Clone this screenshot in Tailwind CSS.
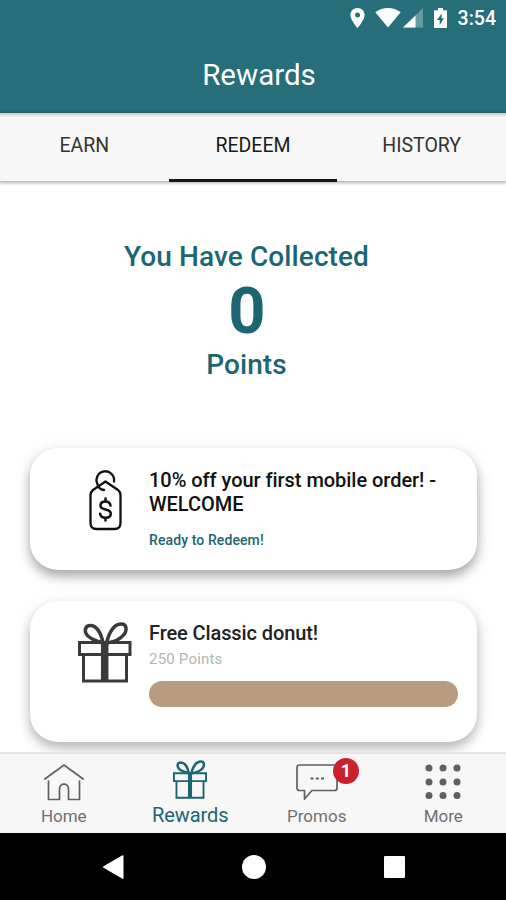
<!DOCTYPE html>
<html lang="en">
<head>
    <meta charset="UTF-8">
    <meta name="viewport" content="width=device-width, initial-scale=1.0">
    <title>Rewards</title>
    <script src="https://cdn.jsdelivr.net/npm/@tailwindcss/browser@4"></script>
</head>
<body class="bg-white font-[Roboto,sans-serif]">
<div class="w-[506px] h-[900px] flex flex-col overflow-hidden">

    <!-- Status bar + title -->
    <header class="h-[113px] shrink-0 bg-[#266e79] text-white">
        <div class="h-9 flex items-center justify-end pr-[10px]">
            <svg class="w-[15px] h-5 mr-[10px]" viewBox="0 0 15 20" fill="currentColor">
                <path fill-rule="evenodd" d="M7.5 0C3.4 0 .4 3 .4 7c0 5 7.100 13 7.100 13s7.100-8 7.100-13c0-4-3-7-7.100-7zm0 4.500a2.500 2.500 0 1 1 0 5 2.500 2.500 0 0 1 0-5z"/>
            </svg>
            <svg class="w-[26px] h-5 mr-[2px]" viewBox="0 0 26 20" fill="currentColor">
                <path d="M13 19.500L.3 4.200C4 1.500 8.300 0 13 0s9 1.500 12.700 4.200z"/>
            </svg>
            <svg class="w-5 h-5 mr-[11px]" viewBox="0 0 20 20" fill="currentColor">
                <path fill-opacity=".3" d="M0 19.500L20 0v19.500z"/>
                <path d="M0 19.500L12.500 7.500v12z"/>
            </svg>
            <svg class="w-[13px] h-5 mr-[11px]" viewBox="0 0 13 20" fill="currentColor">
                <path fill-rule="evenodd" d="M4 0h5v2.200h3c.6 0 1 .4 1 1V19c0 .6-.4 1-1 1H1c-.6 0-1-.4-1-1V3.200c0-.6.400-1 1-1h3zM7.600 5.500L3 12h2.700v5L10 10.200H7.600z"/>
            </svg>
            <span class="pt-px text-[19.5px] font-medium leading-none">3:54</span>
        </div>
        <h1 class="h-[77px] flex items-center justify-center pl-3 pt-px text-[29.5px]">Rewards</h1>
    </header>

    <!-- Tabs -->
    <nav class="relative h-[68px] shrink-0 grid grid-cols-3 bg-[#f7f7f7] text-[19.5px] text-[#333] text-center leading-[66px] shadow-[inset_0_4px_3px_-2px_rgba(0,0,0,0.2),0_1px_3px_1px_rgba(0,0,0,0.3)]">
        <a>EARN</a>
        <a class="text-[#1a1a1a] border-b-3 border-[#151515]">REDEEM</a>
        <a>HISTORY</a>
    </nav>

    <main class="h-[571px] shrink-0 overflow-hidden px-[30px]">
        <!-- Points total -->
        <section class="pt-[58px] h-[267px] flex flex-col items-center font-medium text-[#1b6670]">
            <p class="text-[28px] leading-9 tracking-[0.1px] pr-[13px]">You Have Collected</p>
            <p class="text-[65px] leading-[72px] font-bold tracking-[-1px] pr-[13px]">0</p>
            <p class="text-[28px] leading-9 tracking-[0.1px] pr-[13px]">Points</p>
        </section>

        <!-- Rewards -->
        <article class="h-[122px] mr-[-1px] rounded-[28px] bg-white flex pl-[48px] pt-[20px] shadow-[0_6px_12px_rgba(0,0,0,0.34),0_0_24px_rgba(0,0,0,0.04)]">
            <svg class="w-[54px] h-[64px] shrink-0 mr-[17px]" viewBox="0 0 54 64" fill="none" stroke="#111" stroke-width="2.300" stroke-linecap="round" stroke-linejoin="round">
                <path d="M36 13.500a8.800 8.800 0 1 0-16.700 2.200c.7 3.300 3 5.800 6.700 6.300"/>
                <path d="M27.500 13.500L40 22q2.500 2 2.500 5v28q0 6-6 6H18.500q-6 0-6-6V27q0-3 2.500-5z"/>
                <path stroke-width="2.500" d="M32.500 37.500c-.5-2.700-2-4-5-4s-5 1.400-5 3.900c0 2.700 2.300 3.500 5 4.100s5.300 1.400 5.300 4.200-2.500 4-5.300 4-5-1.200-5.400-3.900M27.500 30.500v2.500M27.500 50v2.500"/>
            </svg>
            <div>
                <h2 class="text-[20px] leading-6 font-medium text-[#111] tracking-[-0.04px] w-[300px]">10% off your first mobile order! - WELCOME</h2>
                <p class="mt-[14px] text-[14px] leading-5 font-medium tracking-[0.1px] text-[#1b6670]">Ready to Redeem!</p>
            </div>
        </article>

        <article class="mt-[31px] h-[141px] mr-[-1px] rounded-[28px] bg-white flex pl-[48px] pt-[20px] shadow-[0_6px_12px_rgba(0,0,0,0.28),0_0_24px_rgba(0,0,0,0.04)]">
            <svg class="w-[54px] h-[62px] shrink-0 mr-[17px]" viewBox="0 0 54 62" fill="none" stroke="#3a3a3a" stroke-width="3">
                <path d="M1.500 21.500h50.500v12h-50.500zM5.500 33.500h43v26.500h-43z"/>
                <path stroke-width="7.500" d="M26.700 21v40"/>
                <path stroke-width="3.500" d="M25 22C23 11 18 4.500 12.500 4.500c-5.500 0-6.500 5.500-3.500 9.500C12 18 18 20 25 22zM28.500 22C31.500 10 37 3 43.500 3c5 0 6 6 2.500 10.500-3.500 4.500-9.500 7.500-17.500 8.500z"/>
            </svg>
            <div>
                <h2 class="text-[20px] leading-6 font-medium text-[#222] tracking-[-0.1px]">Free Classic donut!</h2>
                <p class="mt-[4px] text-[15px] leading-5 tracking-[0.2px] text-[#b5b5b5]">250 Points</p>
                <div class="mt-[12px] w-[309px] h-[26px] rounded-full bg-[#b99b7f]"></div>
            </div>
        </article>
    </main>

    <!-- Bottom navigation -->
    <nav class="relative h-[81px] shrink-0 grid grid-cols-4 bg-[#f7f7f7] border-t-2 border-[#e4e4e4] text-[#707070] text-[17px]">
        <a class="flex flex-col items-center pl-px pt-[9px]">
            <svg class="w-10 h-[40px]" viewBox="0 0 40 40" fill="none" stroke="#606060" stroke-width="1.700" stroke-linecap="round">
                <path d="M.8 16L20 2l19.200 14"/>
                <path d="M4.500 18v18.500h11V26c0-6.500 9-6.500 9 0v10.500h11V18"/>
            </svg>
            <span class="mt-[3px] leading-5">Home</span>
        </a>
        <a class="flex flex-col items-center pl-px pt-[6px] text-[#1b6670]">
            <svg class="w-[34px] h-[39px]" viewBox="0 0 54 62" fill="none" stroke="currentColor" stroke-width="3">
                <path d="M1.500 21h51v12.500h-51zM5.500 33.500h43v26.500h-43z"/>
                <path stroke-width="6.500" d="M27 20v40"/>
                <path stroke-width="4" d="M25 21C23 10 18 4 12 4c-5 0-6 5.500-3 9.500C12 17.500 18 19 25 21zM29 21C32 9.500 38 2.500 44.500 2.500c5 0 6 6 2.500 10.500-3.500 4.500-10 7-18 8z"/>
            </svg>
            <span class="mt-[4px] text-[20px] leading-6 tracking-[-0.1px]">Rewards</span>
        </a>
        <a class="relative flex flex-col items-center pl-px pt-[9px]">
            <svg class="w-[42px] h-[40px]" viewBox="0 0 42 40" fill="none" stroke="#606060" stroke-width="1.700" stroke-linejoin="round">
                <path d="M3.500 2h35q2.500 0 2.500 2.500v20.500q0 2.500-2.500 2.500H16L8.500 36v-8.500h-5q-2.500 0-2.500-2.500V4.500Q1 2 3.500 2z"/>
                <path stroke-width="2.200" d="M14.500 15.500h3M19.800 15.500h3M25 15.500h3"/>
            </svg>
            <span class="mt-[3px] leading-5">Promos</span>
            <span class="absolute left-[80px] top-[4px] w-[26px] h-[26px] rounded-full bg-[#cb202d] text-white text-[18px] font-bold leading-[26px] text-center">1</span>
        </a>
        <a class="flex flex-col items-center pl-px pt-[9px]">
            <svg class="w-[36px] h-[40px]" viewBox="0 0 36 40" fill="#606060">
                <circle cx="4" cy="5" r="3.500"/><circle cx="18" cy="5" r="3.500"/><circle cx="32" cy="5" r="3.500"/>
                <circle cx="4" cy="19" r="3.500"/><circle cx="18" cy="19" r="3.500"/><circle cx="32" cy="19" r="3.500"/>
                <circle cx="4" cy="32.500" r="3.500"/><circle cx="18" cy="32.500" r="3.500"/><circle cx="32" cy="32.500" r="3.500"/>
            </svg>
            <span class="mt-[3px] leading-5">More</span>
        </a>
    </nav>

    <!-- Android buttons -->
    <div class="h-[67px] grow bg-black flex items-center justify-center">
        <svg class="w-[303px] h-6" viewBox="0 0 303 24" fill="#fff">
            <path d="M21.500.8v22.400q0 1-1 .5L1.500 12.800q-1-.8 0-1.600L20.500.3q1-.5 1 .5z"/>
            <circle cx="152" cy="12" r="12"/>
            <rect x="282" y="1" width="21" height="22" rx="1"/>
        </svg>
    </div>
</div>
</body>
</html>
